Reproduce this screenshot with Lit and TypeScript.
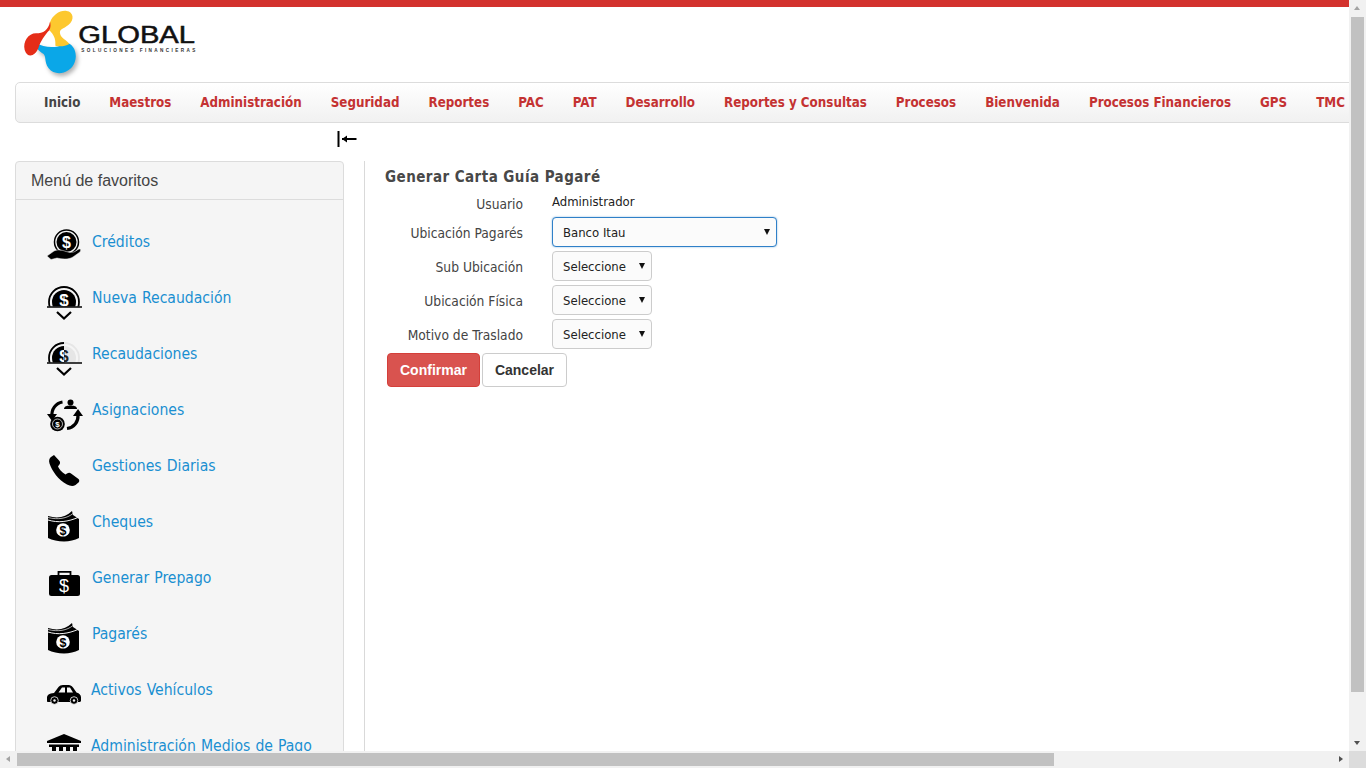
import { LitElement, html, css, svg } from 'lit';
import { customElement } from 'lit/decorators.js';

const coinHalf = (faded: boolean) => svg`
  <defs>
    <clipPath id="above"><rect x="0" y="0" width="36" height="23.500"></rect></clipPath>
    <clipPath id="left"><rect x="0" y="0" width="18" height="23.500"></rect></clipPath>
  </defs>
  <g clip-path="url(#above)" fill="${faded ? '#e6e6e6' : '#000'}">
    <circle cx="18" cy="19" r="12"></circle>
    <circle cx="18" cy="19" r="15" fill="none" stroke="${faded ? '#e6e6e6' : '#000'}" stroke-width="1.800"></circle>
    <text x="18" y="22.500" text-anchor="middle" class="glyph" font-size="17" fill="${faded ? '#222' : '#fff'}">$</text>
  </g>
  ${faded
    ? svg`<g clip-path="url(#left)">
        <circle cx="18" cy="19" r="12"></circle>
        <circle cx="18" cy="19" r="15" fill="none" stroke="#000" stroke-width="1.800"></circle>
        <text x="18" y="22.500" text-anchor="middle" class="glyph" font-size="17" fill="#fff">$</text>
      </g>`
    : ''}
  <path d="M1 24H36" stroke="#000" stroke-width="1.500"></path>
  <path d="M11 29l7 6.500 7-6.500" fill="none" stroke="#000" stroke-width="2.200"></path>`;

const cash = svg`
  <path d="M2 9C12 12 20 10 26 4L27 8L33 12V31C24 36 10 35 2 31Z"></path>
  <path d="M2 13C12 16 22 15 33 10" fill="none" stroke="#f5f5f5" stroke-width="1"></path>
  <path d="M2 10.500C12 13 21 11.500 27 6.500" fill="none" stroke="#f5f5f5" stroke-width=".7"></path>
  <circle cx="17" cy="23" r="6.800" fill="#fff"></circle>
  <text x="17" y="27.500" text-anchor="middle" class="glyph" font-size="12.500">$</text>`;

const icons: Record<string, unknown> = {
  hand: svg`
    <circle cx="20.500" cy="15" r="12" fill="none" stroke="#000" stroke-width="1.500"></circle>
    <circle cx="20.500" cy="15" r="10"></circle>
    <text x="20.500" y="20.500" text-anchor="middle" class="glyph" font-size="16" fill="#fff">$</text>
    <path d="M1 29L8 24C12 22 16 23 20 24.500L24 25.500L28 25L33 22C35 21.500 35 23.500 34 25L27 30C22 33 16 32 11 31L5 32.500Z" stroke="#f5f5f5" stroke-width=".5"></path>`,
  coin: coinHalf(false),
  coinFaded: coinHalf(true),
  cycle: svg`
    <path d="M6 22C5 14 10 8 16.500 7" fill="none" stroke="#000" stroke-width="3.200"></path>
    <path d="M1 19H11L6 26Z"></path>
    <path d="M21 33.500C28 32.500 32.500 27 32 20" fill="none" stroke="#000" stroke-width="3.200"></path>
    <path d="M27 21H37L32 14Z"></path>
    <circle cx="24.500" cy="7.500" r="3"></circle>
    <path d="M18 14C18 11 21.500 10.500 24.500 10.500S31 11 31 14Z"></path>
    <circle cx="11.500" cy="29" r="7.300"></circle>
    <circle cx="11.500" cy="29" r="5" fill="none" stroke="#fff" stroke-width=".7"></circle>
    <text x="11.500" y="32" text-anchor="middle" class="glyph" font-size="8" fill="#fff">$</text>`,
  phone: svg`
    <path d="M8 4L13.500 10C14.500 11.500 14 13 13 14L12 15.500C13 18 16 21.500 19.500 23.500L21 22.500C22.500 21.500 24 21.500 25 22.500L32.500 28C33.500 29 33.500 30.500 32.500 31.500L29.500 34C27 35.500 24 35 21 33.500C12 28.500 6 20 3.500 12.500C2.500 9.500 3.500 7 5 6Z"></path>`,
  cash,
  case: svg`
    <rect x="3" y="12" width="31" height="21" rx="2.500"></rect>
    <path d="M12.500 12V8.800H24.500V12" fill="none" stroke="#000" stroke-width="1.800"></path>
    <text x="18" y="28.500" text-anchor="middle" class="light" font-size="18" fill="#fff">$</text>`,
  car: svg`
    <path d="M1 23C1 20 3 18.500 8 18L12.500 12C13.500 10.800 15 10 17 10H21C24 10 25.500 10.500 27 12.500L30.500 17.500C33.500 18.500 35 20 35 22.500V25.500C35 26.500 34 27 33 27H2C1.300 27 1 26.500 1 25.500Z"></path>
    <path d="M12.500 17.500L16 12.500H19V17.500ZM21 12.500H24L27 17.500H21Z" fill="#f5f5f5"></path>
    <circle cx="8.500" cy="25.500" r="3.800" stroke="#f5f5f5" stroke-width=".8"></circle>
    <circle cx="28" cy="25.500" r="3.800" stroke="#f5f5f5" stroke-width=".8"></circle>
    <circle cx="8.500" cy="25.500" r="1.200" fill="#f5f5f5"></circle>
    <circle cx="28" cy="25.500" r="1.200" fill="#f5f5f5"></circle>`,
  bank: svg`
    <path d="M18 3L35 10V12H1V10Z"></path>
    <path d="M3 13.500H33V16H3ZM6 16H10V28H6ZM13 16H17V28H13ZM20 16H24V28H20ZM27 16H31V28H27Z"></path>`,
};

const favorites = [
  { label: 'Créditos', icon: 'hand' },
  { label: 'Nueva Recaudación', icon: 'coin' },
  { label: 'Recaudaciones', icon: 'coinFaded' },
  { label: 'Asignaciones', icon: 'cycle' },
  { label: 'Gestiones Diarias', icon: 'phone' },
  { label: 'Cheques', icon: 'cash' },
  { label: 'Generar Prepago', icon: 'case' },
  { label: 'Pagarés', icon: 'cash' },
  { label: 'Activos Vehículos', icon: 'car', tight: true },
  { label: 'Administración Medios de Pago', icon: 'bank', tight: true },
];

const menu = [
  'Inicio', 'Maestros', 'Administración', 'Seguridad', 'Reportes', 'PAC', 'PAT', 'Desarrollo',
  'Reportes y Consultas', 'Procesos', 'Bienvenida', 'Procesos Financieros', 'GPS', 'TMC',
];

@customElement('app-root')
export class AppRoot extends LitElement {
  static styles = css`
    :host {
      display: grid;
      grid-template-columns: 1349px 17px;
      grid-template-rows: 751px 17px;
      width: 1366px;
      height: 768px;
      overflow: hidden;
      background: #fff;
      font-family: "DejaVu Sans Condensed", "DejaVu Sans", sans-serif;
      font-stretch: condensed;
      color: #333;
    }

    .page {
      overflow: hidden;
      min-width: 0;
    }

    .topline {
      height: 7px;
      background: #d3322d;
    }

    .brand {
      height: 75px;
      padding-left: 10px;
    }

    .brand svg {
      display: block;
    }

    .brand text {
      font-family: "Liberation Sans", sans-serif;
      font-stretch: normal;
    }

    .nav {
      display: flex;
      align-items: center;
      gap: 29px;
      box-sizing: border-box;
      width: 1400px;
      height: 41px;
      margin-left: 15px;
      padding: 0 0 1px 28px;
      border: 1px solid #dcdcdc;
      border-radius: 5px;
      background: linear-gradient(#fff, #f1f1f1);
      font-size: 13.25px;
      font-weight: bold;
      white-space: nowrap;
      color: #c43232;
    }

    .nav .active {
      color: #444;
    }

    .collapse {
      box-sizing: border-box;
      height: 38px;
      padding: 8px 0 0 337px;
    }

    .collapse svg {
      display: block;
    }

    .columns {
      display: flex;
      margin-left: 15px;
    }

    .panel {
      flex: none;
      box-sizing: border-box;
      width: 329px;
      height: 620px;
      border: 1px solid #dcdcdc;
      border-radius: 4px 4px 0 0;
      background: #f5f5f5;
    }

    .panel h3 {
      box-sizing: border-box;
      height: 38px;
      margin: 0;
      padding: 0 15px;
      border-bottom: 1px solid #dcdcdc;
      font: 16px/37px "Liberation Sans", sans-serif;
      color: #444;
    }

    .favorites {
      padding: 17px 0 0 30px;
    }

    .fav {
      display: flex;
      gap: 10px;
      box-sizing: border-box;
      height: 56px;
      padding-top: 10px;
    }

    .fav svg {
      flex: none;
      overflow: visible;
    }

    .fav span {
      margin-top: 5px;
      font-size: 15.6px;
      word-spacing: 0.6px;
      line-height: 20px;
      white-space: nowrap;
      color: #1a8fd1;
    }

    .fav.tight span {
      margin-left: -1px;
    }

    .glyph {
      font-family: "Liberation Sans", sans-serif;
      font-stretch: normal;
      font-weight: bold;
    }

    .light {
      font-family: "Liberation Sans", sans-serif;
      font-stretch: normal;
    }

    .content {
      flex: 1;
      margin-left: 20px;
      padding: 6px 0 0 20px;
      border-left: 1px solid #d9d9d9;
    }

    .content h2 {
      margin: 0;
      font-size: 15px;
      line-height: 20px;
      font-weight: bold;
      letter-spacing: 0.45px;
      color: #484848;
    }

    .form {
      display: grid;
      grid-template-columns: 138px auto;
      column-gap: 29px;
      row-gap: 4px;
      justify-content: start;
      justify-items: start;
      align-items: center;
      margin-top: 4px;
      font-size: 13px;
    }

    .form label {
      justify-self: end;
      padding-top: 2px;
      font-size: 13.7px;
      color: #444;
    }

    .form .user-label {
      align-self: end;
      margin-bottom: 1px;
      padding-top: 0;
      line-height: 16px;
    }

    .user {
      height: 22px;
      line-height: 22px;
      color: #222;
    }

    .field {
      position: relative;
      display: block;
    }

    .field::after {
      content: "";
      position: absolute;
      top: 12px;
      right: 7px;
      border-style: solid;
      border-width: 6px 3.5px 0;
      border-color: #111 transparent transparent;
      pointer-events: none;
    }

    select {
      display: block;
      box-sizing: border-box;
      width: 100px;
      height: 30px;
      padding: 0 0 0 10px;
      border: 1px solid #ccc;
      border-radius: 4px;
      background: #fbfbfb;
      appearance: none;
      font: inherit;
      font-stretch: condensed;
      color: #222;
    }

    select.wide {
      width: 225px;
      border-color: #2f80c8;
      box-shadow: 0 0 2px rgba(47, 128, 200, 0.6);
    }

    .actions {
      display: flex;
      gap: 2px;
      margin: 4px 0 0 2px;
    }

    button {
      box-sizing: border-box;
      height: 34px;
      padding: 0 12px;
      border: 1px solid #ccc;
      border-radius: 4px;
      background: #fff;
      font: bold 14px "Liberation Sans", sans-serif;
      color: #333;
    }

    button.primary {
      border-color: #d43f3a;
      background: #d9534f;
      color: #fff;
    }

    .bar {
      position: relative;
      background: #f1f1f1;
    }

    .bar i {
      position: absolute;
      width: 0;
      height: 0;
      border-style: solid;
      border-color: transparent;
    }

    .thumb {
      background: #c1c1c1;
    }

    .vbar {
      padding: 17px 2px 0;
    }

    .vbar .thumb {
      width: 13px;
      height: 675px;
    }

    .vbar .up {
      top: 6px;
      left: 5px;
      border-width: 0 3.5px 4px;
      border-bottom-color: #a3a3a3;
    }

    .vbar .down {
      bottom: 6px;
      left: 5px;
      border-width: 4px 3.5px 0;
      border-top-color: #505050;
    }

    .hbar {
      padding: 2px 0 0 17px;
    }

    .hbar .thumb {
      width: 1037px;
      height: 13px;
    }

    .hbar .back {
      top: 5px;
      left: 6px;
      border-width: 3.5px 4px 3.5px 0;
      border-right-color: #a3a3a3;
    }

    .hbar .forward {
      top: 5px;
      right: 6px;
      border-width: 3.5px 0 3.5px 4px;
      border-left-color: #505050;
    }

    .corner {
      background: #dcdcdc;
    }
  `;

  private renderLogo() {
    return html`
      <svg width="200" height="75" viewBox="0 6 600 225">
        <path style="filter: drop-shadow(6px 9px 6px rgba(0,0,0,.3))" fill="#0aa7e8" d="M80 114C100 128 140 132 160 116C184 106 206 140 194 172C182 206 136 216 116 190C100 168 112 152 96 144C84 136 76 128 80 114Z"></path>
        <path fill="#fdc82f" d="M120 52C128 30 150 15 170 18C190 20 195 45 175 60C160 72 148 72 150 85C152 100 170 105 178 117C165 124 150 126 136 122C138 100 130 88 118 76Z"></path>
        <path fill="#e52d18" d="M120 50C115 75 100 85 78 85C55 85 38 110 44 135C52 160 75 155 85 130C90 112 104 90 118 76C122 68 123 58 120 50Z"></path>
        <text x="205" y="115" font-size="69" textLength="350" lengthAdjust="spacingAndGlyphs" stroke="#111" stroke-width="1.500" fill="#111">GLOBAL</text>
        <text x="214" y="141" font-size="14" font-weight="bold" textLength="342" fill="#333">SOLUCIONES FINANCIERAS</text>
      </svg>`;
  }

  render() {
    return html`
      <div class="page">
        <div class="topline"></div>
        <div class="brand">${this.renderLogo()}</div>
        <nav class="nav">
          ${menu.map((m, i) => html`<span class=${i === 0 ? 'active' : ''}>${m}</span>`)}
        </nav>
        <div class="collapse">
          <svg width="20" height="16" viewBox="0 0 20 16">
            <path d="M1.500 0V16" stroke="#000" stroke-width="2"></path>
            <path d="M5 8H19.500" stroke="#000" stroke-width="2"></path>
            <path d="M5 8L10 4.500V11.500Z"></path>
          </svg>
        </div>
        <div class="columns">
          <aside class="panel">
            <h3>Menú de favoritos</h3>
            <div class="favorites">
              ${favorites.map(
                (f) => html`
                  <div class="fav ${f.tight ? 'tight' : ''}">
                    <svg width="36" height="36" viewBox="0 0 36 36">${icons[f.icon]}</svg>
                    <span>${f.label}</span>
                  </div>
                `
              )}
            </div>
          </aside>
          <section class="content">
            <h2>Generar Carta Guía Pagaré</h2>
            <div class="form">
              <label class="user-label">Usuario</label>
              <div class="user">Administrador</div>
              <label>Ubicación Pagarés</label>
              <span class="field"><select class="wide"><option>Banco Itau</option></select></span>
              <label>Sub Ubicación</label>
              <span class="field"><select><option>Seleccione</option></select></span>
              <label>Ubicación Física</label>
              <span class="field"><select><option>Seleccione</option></select></span>
              <label>Motivo de Traslado</label>
              <span class="field"><select><option>Seleccione</option></select></span>
            </div>
            <div class="actions">
              <button class="primary">Confirmar</button>
              <button>Cancelar</button>
            </div>
          </section>
        </div>
      </div>
      <div class="bar vbar">
        <i class="up"></i>
        <div class="thumb"></div>
        <i class="down"></i>
      </div>
      <div class="bar hbar">
        <i class="back"></i>
        <div class="thumb"></div>
        <i class="forward"></i>
      </div>
      <div class="corner"></div>
    `;
  }
}
